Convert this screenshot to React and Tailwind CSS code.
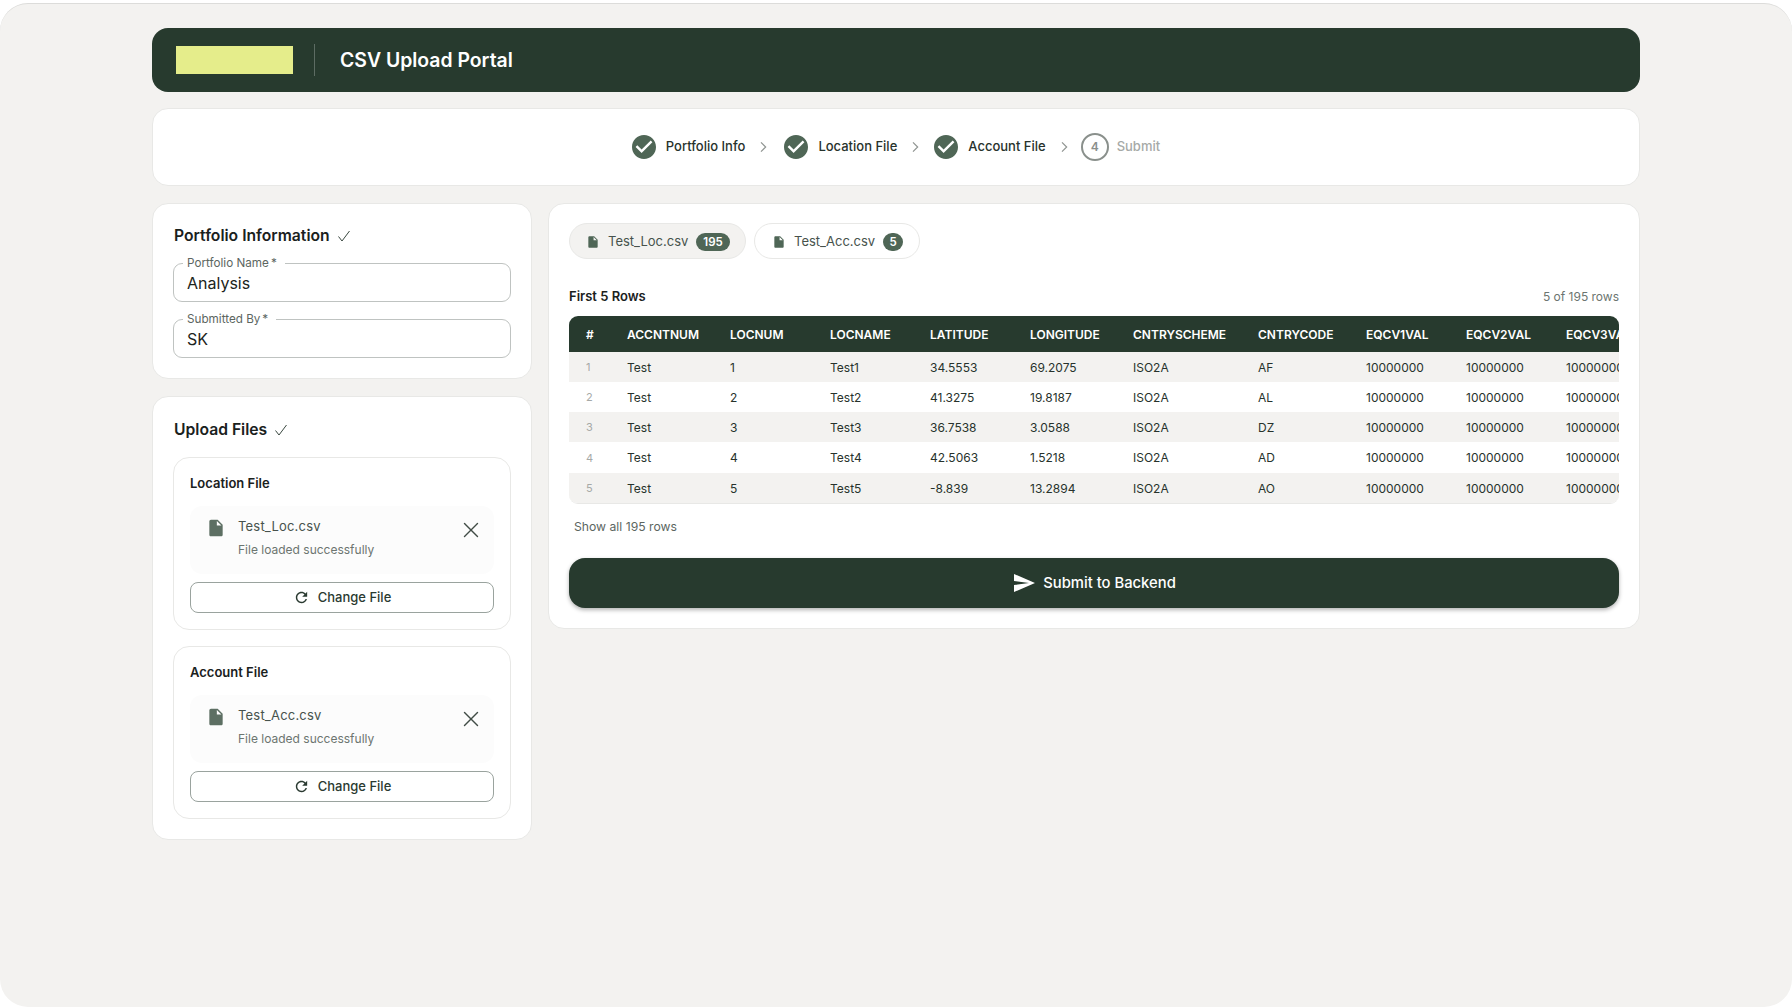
import React from 'react';
import { X } from 'lucide-react';

const FONT = "font-['Inter',sans-serif]";

const columns = ['#', 'ACCNTNUM', 'LOCNUM', 'LOCNAME', 'LATITUDE', 'LONGITUDE', 'CNTRYSCHEME', 'CNTRYCODE', 'EQCV1VAL', 'EQCV2VAL', 'EQCV3VAL'];
const widths = [42, 103, 100, 100, 100, 103, 125, 108, 100, 100, 100];
const rows = [
    ['1', 'Test', '1', 'Test1', '34.5553', '69.2075', 'ISO2A', 'AF'],
    ['2', 'Test', '2', 'Test2', '41.3275', '19.8187', 'ISO2A', 'AL'],
    ['3', 'Test', '3', 'Test3', '36.7538', '3.0588', 'ISO2A', 'DZ'],
    ['4', 'Test', '4', 'Test4', '42.5063', '1.5218', 'ISO2A', 'AD'],
    ['5', 'Test', '5', 'Test5', '-8.839', '13.2894', 'ISO2A', 'AO'],
];
const steps = [
    { label: 'Portfolio Info', chevron: 'mr-[13px]' },
    { label: 'Location File', chevron: 'mr-[11px]' },
    { label: 'Account File', chevron: 'mr-[12px]' },
];

const FileIcon = ({ className }) => (
    <svg viewBox="0 0 24 24" className={className} fill="currentColor">
        <path d="M6 2c-1.1 0-2 .9-2 2v16c0 1.1.9 2 2 2h12c1.1 0 2-.9 2-2V8l-6-6H6zm7 7V3.5L18.5 9H13z" />
    </svg>
);

const CheckCircle = () => (
    <svg viewBox="2 2 20 20" className="w-6 h-6 text-[#4f6656]" fill="currentColor">
        <path d="M12 2C6.48 2 2 6.48 2 12s4.48 10 10 10 10-4.48 10-10S17.52 2 12 2zm-2 15-5-5 1.41-1.41L10 14.17l7.59-7.59L19 8l-9 9z" />
    </svg>
);

const Chevron = ({ className }) => (
    <svg viewBox="0 0 24 24" className={`w-4 h-4 text-[#8f9491] ml-[10px] ${className}`} fill="none" stroke="currentColor" strokeWidth="1.8">
        <path d="m9 5 7 7-7 7" />
    </svg>
);

const ThinCheck = () => (
    <svg viewBox="0 0 16 16" className="w-4 h-4 text-[#39473f] ml-[6px]" fill="none" stroke="currentColor" strokeWidth="1">
        <path d="m2.5 8.5 3.5 4.5 7.5-10" />
    </svg>
);

const Field = ({ label, value }) => (
    <div className="relative h-[39px] border border-[#bfc3c1] rounded-[9px] flex items-center px-[13px] text-[16px] text-[#1c2420]">
        <span className="absolute -top-[8px] left-[9px] pl-[4px] pr-[8px] bg-white text-[11.7px] leading-[14px] text-[#5c6661]">
            {label}<span className="ml-[2px]">*</span>
        </span>
        {value}
    </div>
);

const FileCard = ({ title, name }) => (
    <div className="border border-[#e8e8e6] rounded-[16px] px-4 pt-[15px] pb-[16px]">
        <div className="text-[13px] leading-[20px] font-semibold text-[#1a211d]">{title}</div>
        <div className="mt-[13px] h-[68px] rounded-[12px] bg-[#fcfcfc] flex items-start pl-[16px] pr-[10px] pt-[10px]">
            <FileIcon className="w-[20px] h-[20px] text-[#5d6f63] shrink-0 mt-[2px]" />
            <div className="ml-[12px] flex-1">
                <div className="text-[13px] leading-[20px] text-[#47524c] tracking-[0.2px]">{name}</div>
                <div className="text-[12px] leading-[18px] mt-[5px] text-[#6c7570]">File loaded successfully</div>
            </div>
            <X className="w-[26px] h-[26px] text-[#414c46] mt-[1px]" strokeWidth={1.3} />
        </div>
        <button className="mt-[8px] w-full h-[31px] rounded-[8px] border border-[#9aa39e] bg-white flex items-center justify-center gap-[8px] text-[13px] font-medium text-[#2a3a31]">
            <svg viewBox="0 0 24 24" className="w-[17px] h-[17px]" fill="currentColor">
                <path d="M17.65 6.35C16.2 4.9 14.21 4 12 4c-4.42 0-7.99 3.58-7.99 8s3.57 8 7.99 8c3.73 0 6.84-2.55 7.73-6h-2.08c-.82 2.33-3.04 4-5.65 4-3.31 0-6-2.69-6-6s2.69-6 6-6c1.66 0 3.14.69 4.22 1.78L13 11h7V4l-2.35 2.35z" />
            </svg>
            Change File
        </button>
    </div>
);

const App = () => {
    return (
        <div className={`min-h-[1007px] bg-white pt-[3px] ${FONT}`}>
            <div className="h-[1004px] bg-[#f3f2f0] border-t border-[#dcdcda] rounded-[28px] px-[152px] pt-[24px]">
                {/* Header */}
                <div className="h-[64px] bg-[#273a2e] rounded-[16px] flex items-center pl-6">
                    <div className="w-[117px] h-[28px] bg-[#e5ed8b]" />
                    <div className="w-px h-8 bg-[#5d6c63] ml-[21px]" />
                    <h1 className="ml-[25px] pt-[2px] text-[19.4px] font-semibold text-white">CSV Upload Portal</h1>
                </div>

                {/* Stepper */}
                <div className="mt-4 h-[78px] bg-white border border-[#e8e8e6] rounded-[16px] flex items-center justify-center">
                    {steps.map((step) => (
                        <div key={step.label} className="flex items-center">
                            <CheckCircle />
                            <span className="ml-[10px] text-[13px] font-medium text-[#27322c]">{step.label}</span>
                            <Chevron className={step.chevron} />
                        </div>
                    ))}
                    <div className="-ml-[3px] w-7 h-7 rounded-full border-2 border-[#8a908c] flex items-center justify-center text-[12px] font-semibold text-[#8a908c]">4</div>
                    <span className="ml-[8px] text-[13px] font-medium text-[#a6a9a7]">Submit</span>
                </div>

                <div className="mt-[17px] flex items-start gap-4">
                    {/* Left column */}
                    <div className="w-[380px] shrink-0 flex flex-col gap-[17px]">
                        <div className="h-[176px] bg-white border border-[#e8e8e6] rounded-[16px] px-5 pt-[20px]">
                            <div className="flex items-center h-[24px]">
                                <h2 className="ml-px text-[15.7px] font-semibold text-[#1a211d]">Portfolio Information</h2>
                                <ThinCheck />
                            </div>
                            <div className="mt-[15px] flex flex-col gap-[17px]">
                                <Field label="Portfolio Name" value="Analysis" />
                                <Field label="Submitted By" value="SK" />
                            </div>
                        </div>

                        <div className="bg-white border border-[#e8e8e6] rounded-[16px] px-5 pt-[21px] pb-[20px]">
                            <div className="flex items-center h-[24px]">
                                <h2 className="ml-px text-[15.7px] font-semibold text-[#1a211d]">Upload Files</h2>
                                <ThinCheck />
                            </div>
                            <div className="mt-[15px] flex flex-col gap-[16px]">
                                <FileCard title="Location File" name="Test_Loc.csv" />
                                <FileCard title="Account File" name="Test_Acc.csv" />
                            </div>
                        </div>
                    </div>

                    {/* Right column */}
                    <div className="flex-1 min-w-0 h-[426px] bg-white border border-[#e8e8e6] rounded-[16px] px-5 pt-[19px]">
                        <div className="flex gap-2">
                            <div className="h-[36px] w-[177px] rounded-full bg-[#f3f2f0] border border-[#e8e8e6] flex items-center pl-[16px] pt-[1px] text-[13px] text-[#47524c]">
                                <FileIcon className="w-[14px] h-[14px] text-[#4f6656]" />
                                <span className="ml-[8px]">Test_Loc.csv</span>
                                <span className="ml-[8px] h-[18px] px-[7px] rounded-full bg-[#4f6656] text-white text-[11.5px] font-semibold leading-[18px]">195</span>
                            </div>
                            <div className="h-[36px] w-[166px] rounded-full bg-white border border-[#e8e8e6] flex items-center pl-[17px] pt-[1px] text-[13px] text-[#47524c]">
                                <FileIcon className="w-[14px] h-[14px] text-[#4f6656]" />
                                <span className="ml-[8px]">Test_Acc.csv</span>
                                <span className="ml-[8px] w-[20px] h-[18px] text-center rounded-full bg-[#4f6656] text-white text-[11.5px] font-semibold leading-[18px]">5</span>
                            </div>
                        </div>

                        <div className="mt-[28px] flex items-center justify-between h-[20px]">
                            <span className="text-[13px] font-semibold text-[#1a211d]">First 5 Rows</span>
                            <span className="text-[12px] text-[#6c7570]">5 of 195 rows</span>
                        </div>

                        <div className="mt-[9px] rounded-[9px] border-b border-[#e8e8e6] overflow-hidden">
                            <table className="table-fixed border-collapse w-[1081px] text-left">
                                <colgroup>
                                    {widths.map((w, i) => <col key={i} style={{ width: w }} />)}
                                </colgroup>
                                <thead>
                                    <tr className="h-[36px] bg-[#273a2e] text-white text-[12px] font-semibold">
                                        {columns.map((c, i) => (
                                            <th key={c} className={`${i === 0 ? 'pl-[17px]' : 'pl-4'} pt-px font-semibold whitespace-nowrap overflow-hidden`}>{c}</th>
                                        ))}
                                    </tr>
                                </thead>
                                <tbody>
                                    {rows.map((row, r) => (
                                        <tr key={row[0]} className={`${r === 3 ? 'h-[31px]' : 'h-[30px]'} text-[12px] text-[#27322c] ${r % 2 === 0 ? 'bg-[#f3f2f0]' : 'bg-white'}`}>
                                            {row.map((cell, i) => (
                                                <td key={i} className={i === 0 ? 'pl-[17px] pt-px text-[11px] text-[#a6a9a7]' : 'pl-4 pt-px'}>{cell}</td>
                                            ))}
                                            <td className="pl-4 pt-px">10000000</td>
                                            <td className="pl-4 pt-px">10000000</td>
                                            <td className="pl-4 pt-px whitespace-nowrap overflow-hidden">10000000</td>
                                        </tr>
                                    ))}
                                </tbody>
                            </table>
                        </div>

                        <div className="mt-[14px] ml-[5px] text-[12.2px] leading-[18px] text-[#5c6661]">Show all 195 rows</div>

                        <button className="mt-[22px] w-full h-[50px] rounded-[16px] bg-[#273a2e] text-white text-[14.8px] font-medium flex items-center justify-center gap-[7px] shadow-[0_2px_4px_rgba(0,0,0,0.3)]">
                            <svg viewBox="0 0 24 24" className="w-6 h-6" fill="currentColor">
                                <path d="M2.01 21 23 12 2.01 3 2 10l15 2-15 2z" />
                            </svg>
                            Submit to Backend
                        </button>
                    </div>
                </div>
            </div>
        </div>
    );
};

export default App;
